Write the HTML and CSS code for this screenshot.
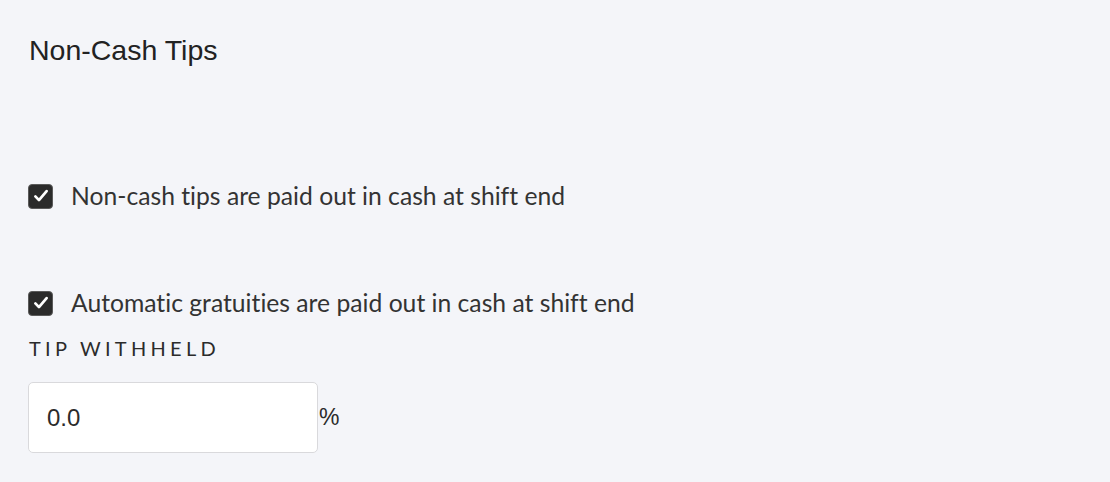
FILE: index.html
```html
<!DOCTYPE html>
<html lang="en">
<head>
    <meta charset="UTF-8">
    <title>Non-Cash Tips</title>
    <link rel="stylesheet" href="styles.css">
</head>
<body>
    <section class="panel">
        <h1>Non-Cash Tips</h1>

        <label class="check first">
            <span class="box">
                <svg viewBox="0 0 24 24" width="18" height="18"><path d="M4.5 12.5l4.8 5L19.5 5.5" fill="none" stroke="#fff" stroke-width="3.6" stroke-linecap="round" stroke-linejoin="round"/></svg>
            </span>
            Non-cash tips are paid out in cash at shift end
        </label>

        <label class="check second">
            <span class="box">
                <svg viewBox="0 0 24 24" width="18" height="18"><path d="M4.5 12.5l4.8 5L19.5 5.5" fill="none" stroke="#fff" stroke-width="3.6" stroke-linecap="round" stroke-linejoin="round"/></svg>
            </span>
            Automatic gratuities are paid out in cash at shift end
        </label>

        <div class="field-label">Tip Withheld</div>
        <div class="field">
            <input type="text" value="0.0">
            <span class="unit">%</span>
        </div>
    </section>
</body>
</html>
```

FILE: styles.css
```css
body {
    background-color: #f4f5f9;
    margin: 0;
    padding: 0;
    color: #2b2b2b;
}
.panel {
    padding: 34px 28px 0;
}
h1 {
    font-family: 'Liberation Sans', Arial, sans-serif;
    font-weight: normal;
    font-size: 28.5px;
    margin: 0 0 0 1px;
    line-height: 32px;
    color: #222;
}
.check {
    display: flex;
    align-items: center;
    font-family: Lato, sans-serif;
    font-size: 24.7px;
    font-variant-ligatures: none;
    color: #333;
    line-height: 30px;
}
.check.first {
    margin-top: 115px;
}
.check.second {
    margin-top: 77px;
}
.box {
    width: 25px;
    height: 25px;
    box-sizing: border-box;
    background-color: #2b2b2b;
    border: 1px solid #5a5a5a;
    border-radius: 4px;
    display: flex;
    align-items: center;
    justify-content: center;
    margin-right: 18px;
}
.field-label {
    font-family: Lato, sans-serif;
    font-size: 20px;
    text-transform: uppercase;
    letter-spacing: 4.3px;
    color: #2b2b2b;
    margin: 18px 0 0 1px;
    line-height: 24px;
}
.field {
    display: flex;
    align-items: center;
    margin-top: 22px;
}
.field input {
    width: 290px;
    height: 71px;
    box-sizing: border-box;
    border: 1px solid #d9d9dc;
    border-radius: 5px;
    background: #fff;
    padding: 0 18px;
    font-family: 'Liberation Sans', Arial, sans-serif;
    font-size: 24px;
    color: #2b2b2b;
}
.unit {
    font-family: 'Liberation Sans', Arial, sans-serif;
    font-size: 23px;
    color: #2b2b2b;
    margin-left: 1px;
}
```
